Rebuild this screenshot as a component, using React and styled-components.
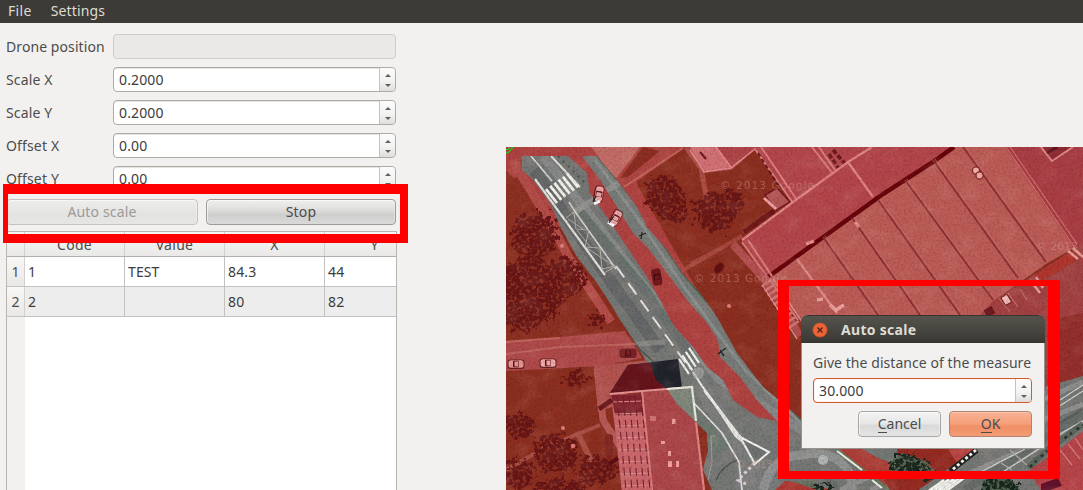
import React from "react";
import styled, { createGlobalStyle, css } from "styled-components";

const Global = createGlobalStyle`
  * { box-sizing: border-box; }
  html, body { margin: 0; padding: 0; }
  body { background: #f2f1f0; overflow: hidden; }
`;

const Window = styled.div`
  position: relative;
  width: 1083px;
  height: 490px;
  overflow: hidden;
  display: flex;
  flex-direction: column;
  background: #f2f1f0;
  color: #4c4c4c;
  font-family: "Noto Sans", "Open Sans", sans-serif;
  font-size: 14px;
  line-height: 20px;
`;

const MenuBar = styled.nav`
  flex: none;
  height: 23px;
  display: flex;
  gap: 19px;
  padding: 1px 8px 0;
  background: #3c3b37;
  color: #dfdbd2;
`;

const Fit = styled.span`
  white-space: pre;
  letter-spacing: ${(p) => p.$ls || 0}px;
`;

const Workspace = styled.div`
  flex: 1;
  min-height: 0;
  display: flex;
  justify-content: space-between;
`;

const Sidebar = styled.aside`
  width: 397px;
  padding: 11px 0 0 6px;
  display: flex;
  flex-direction: column;
`;

const Form = styled.div`
  display: flex;
  flex-direction: column;
  gap: 8px;
  margin-bottom: 8px;
`;

const FormRow = styled.div`
  display: grid;
  grid-template-columns: 107px 283px;
  height: 25px;
  align-items: center;
`;

const Spin = styled.div`
  height: 25px;
  display: flex;
  align-items: stretch;
  border: 1px solid ${(p) => (p.$focus ? "#d45a2c" : "#aeaaa5")};
  border-radius: 4px;
  overflow: hidden;
  background: #fff;
  color: #3c3c3c;
  box-shadow: ${(p) => (p.$focus ? "inset 0 0 1px #e58a66" : "inset 0 1px 0 #e8e5e1")};
  ${(p) =>
    p.$disabled &&
    css`
      background: #eae9e8;
      border-color: #cfcdcb;
      box-shadow: none;
    `}
`;

const SpinValue = styled.div`
  flex: 1;
  padding: 2px 0 0 5px;
`;

const SpinArrows = styled.div`
  width: 17px;
  margin: -1px -1px -1px 0;
  padding: 6px 0 4px;
  display: flex;
  flex-direction: column;
  align-items: center;
  justify-content: space-between;
  border: 1px solid #c4c1be;
  border-radius: 0 4px 4px 0;
  background: linear-gradient(#fbfbfb, #f3f3f2 55%, #dededd);
`;

const Arrow = styled.i`
  width: 0;
  height: 0;
  border: solid transparent;
  border-width: ${(p) => (p.$up ? "0 3px 3px" : "3px 3px 0")};
  ${(p) => (p.$up ? "border-bottom-color" : "border-top-color")}: #606060;
`;

const ButtonRow = styled.div`
  display: flex;
  justify-content: flex-end;
  gap: 8px;
  padding-right: ${(p) => p.$inset || 0}px;
`;

const Button = styled.button`
  width: ${(p) => p.$w}px;
  height: 26px;
  padding: 0;
  font: inherit;
  line-height: 22px;
  color: #4c4c4c;
  border: 1px solid #9e9c9a;
  border-radius: 4px;
  background: linear-gradient(#efefee, #dcdcdb 45%, #cecece 60%, #dadad9);
  box-shadow: inset 1px 1px 0 #ffffff90, inset -1px 0 0 #ffffff50;
  ${(p) =>
    p.$kind === "light" &&
    css`
      background: linear-gradient(#f3f3f3, #e6e6e6 50%, #d9d9d9 55%, #e4e4e4);
      border-color: #a9a7a5;
    `}
  ${(p) =>
    p.$kind === "primary" &&
    css`
      background: linear-gradient(#f9b294, #f59f7b 50%, #f08f66 60%, #f39c76);
      border-color: #b08472;
      box-shadow: inset 0 1px 0 #fcc7b0;
    `}
  ${(p) =>
    p.$kind === "disabled" &&
    css`
      background: linear-gradient(#ededec, #e3e3e2 60%, #e7e6e5);
      color: #9c9a98;
      border-color: #c5c3c1;
    `}
`;

const Mnemonic = styled.span`
  border-bottom: 1px solid #4c4c4c;
  display: inline-block;
  line-height: 17px;
`;

const Table = styled.div`
  flex: 1;
  margin-top: 6px;
  width: 391px;
  overflow: hidden;
  border: solid #b9b5b0;
  border-width: 1px 1px 0;
  background: linear-gradient(to right, #f2f1f0 18px, #fff 18px);
  color: #3c3c3c;
`;

const TableRow = styled.div`
  display: grid;
  grid-template-columns: 18px 100px 100px 100px 100px;
  width: 418px;
  height: ${(p) => (p.$head ? 25 : 30)}px;
  border-bottom: 1px solid ${(p) => (p.$head ? "#b3afaa" : "#c4c2c0")};
  background: ${(p) => (p.$head ? "linear-gradient(#f6f6f5, #eae9e8)" : p.$alt ? "#ededed" : "#fff")};
`;

const Cell = styled.div`
  padding: 5px 0 0 3px;
  border-right: 1px solid #c4c2c0;
`;

const HeadCell = styled.div`
  padding-top: ${(p) => (p.$row ? 5 : 3)}px;
  text-align: center;
  color: #4c4c4c;
  border-right: 1px solid #d3d1cf;
  background: ${(p) => (p.$row ? "linear-gradient(#f8f8f7, #e9e8e7)" : "transparent")};
`;

const MapPane = styled.main`
  width: 577px;
  padding-top: 124px;
  svg { display: block; }
`;

const Highlight = styled.div`
  position: absolute;
  left: ${(p) => p.$x}px;
  top: ${(p) => p.$y}px;
  width: ${(p) => p.$w}px;
  height: ${(p) => p.$h}px;
  border: solid #f00;
  border-width: ${(p) => p.$b};
  pointer-events: none;
`;

const Dialog = styled.section`
  position: absolute;
  left: 801px;
  top: 315px;
  width: 244px;
  height: 134px;
  border-radius: 7px 7px 0 0;
  background: #f2f1f0;
  border: 1px solid #96938c;
  border-top: 0;
`;

const TitleBar = styled.header`
  height: 28px;
  margin: 0 -1px;
  padding: 0 11px;
  display: flex;
  align-items: center;
  gap: 13px;
  border-radius: 7px 7px 0 0;
  border-top: 1px solid #35342f;
  background: linear-gradient(#55534c, #3d3c38 85%, #35342f);
  color: #dfdbd2;
  font-weight: 700;
`;

const DialogBody = styled.div`
  padding: 10px 12px 0 11px;
  display: flex;
  flex-direction: column;
`;

const SpinHolder = styled.div`
  margin: 5px 0 8px;
`;

function SpinBox({ value, focus }) {
  return (
    <Spin $focus={focus}>
      <SpinValue><Fit $ls={0.12}>{value}</Fit></SpinValue>
      <SpinArrows><Arrow $up /><Arrow /></SpinArrows>
    </Spin>
  );
}

const lerp = (a, b, n) => Array.from({ length: n }, (_, i) => a + ((b - a) * i) / (n - 1));

const mainRoad =
  "522,156 568,156 587,173 590,193 607,217 627,247 647,277 660,300 670,320 677,330 693,347 707,367 723,380 733,400 757,417 777,421 802,438 830,449 1083,376 1083,490 712,490 703,470 708,450 707,433 697,423 677,403 657,380 650,367 627,330 620,320 610,303 597,283 577,257 562,230 550,203 533,180 522,170";
const sideRoad =
  "582,156 597,156 617,180 637,207 647,227 667,250 682,273 700,293 717,317 737,353 763,387 787,407 802,420 802,438 777,421 757,400 740,377 720,357 718,340 707,323 687,300 667,273 647,247 633,233 617,207 600,180";

const trees = [
  [535, 235, 24, 22], [530, 290, 34, 34], [566, 278, 20, 20], [522, 310, 22, 22],
  [664, 195, 18, 20], [674, 208, 12, 14], [715, 212, 21, 20], [735, 200, 9, 12],
  [519, 426, 17, 12], [556, 453, 22, 20], [518, 474, 16, 14], [597, 470, 20, 14],
  [576, 377, 11, 9], [597, 320, 7, 7], [560, 486, 26, 8], [1070, 350, 12, 22],
];

function Car({ x, y, r = 0, body = "#f0a9a9", cabin = "#5d1015" }) {
  return (
    <g transform={`translate(${x} ${y}) rotate(${r})`}>
      <rect x="-8.5" y="-4.5" width="17" height="9.5" rx="3" fill="#4b0c0e" opacity=".7" />
      <rect x="-7.5" y="-3.8" width="15" height="7.6" rx="2.5" fill={body} />
      <rect x="-3" y="-3.3" width="6" height="6.6" rx="1" fill={cabin} />
      <rect x="-1.5" y="-2.5" width="4" height="5" fill={body} />
    </g>
  );
}

function AerialMap() {
  return (
    <svg width="577" height="343" viewBox="506 147 577 343">
      <defs>
        <filter id="grain" x="0" y="0" width="100%" height="100%">
          <feTurbulence type="fractalNoise" baseFrequency=".45" numOctaves="3" seed="4" />
          <feColorMatrix values="0 0 0 0 0  0 0 0 0 0  0 0 0 0 0  2.2 0 0 0 -.92" />
        </filter>
        <filter id="glow" x="0" y="0" width="100%" height="100%">
          <feTurbulence type="fractalNoise" baseFrequency=".05 .07" numOctaves="3" seed="9" />
          <feColorMatrix values="0 0 0 0 .9  0 0 0 0 .6  0 0 0 0 .5  2 0 0 0 -.95" />
        </filter>
        <filter id="leaves" x="-20%" y="-20%" width="140%" height="140%">
          <feTurbulence type="fractalNoise" baseFrequency=".17" numOctaves="3" seed="3" result="n" />
          <feDisplacementMap in="SourceGraphic" in2="n" scale="20" xChannelSelector="R" yChannelSelector="G" result="d" />
          <feTurbulence type="fractalNoise" baseFrequency=".3" numOctaves="2" seed="8" />
          <feColorMatrix values="0 0 0 0 0  0 0 0 0 0  0 0 0 0 0  7 0 0 0 -2.4" result="m" />
          <feComposite in="d" in2="m" operator="in" />
        </filter>
        <clipPath id="roads"><polygon points={mainRoad} /><polygon points={sideRoad} /></clipPath>
      </defs>

      <rect x="506" y="147" width="577" height="343" fill="#8d2f20" />

      {/* pavements and lawns */}
      <polygon points="506,147 622,147 640,190 760,400 802,425 802,440 720,400 506,170" fill="#b04341" />
      <polygon points="506,180 522,176 556,222 575,262 612,322 627,340 506,338" fill="#8e3022" />
      <path d="M512 160L550 222L569 258L611 322" stroke="#b54d49" strokeWidth="9" fill="none" />
      <polygon points="591,147 650,147 640,158 616,180" fill="#c46c66" />
      <polygon points="640,147 685,147 618,195 612,184" fill="#b04743" />
      <path d="M624 187L683 148" stroke="#c6645f" strokeWidth="2" />
      <polygon points="643,147 660,151 628,177 620,178" fill="#8d2f22" />
      <path d="M680 272L742 236M690 264L724 247" stroke="#b04e45" strokeWidth="4" opacity=".75" />
      <path d="M686 147L701 168L706 195" stroke="#b04e45" strokeWidth="5" fill="none" />
      <polygon points="506,341 560,337 625,331 642,358 602,366 506,371" fill="#b04a4a" />
      <path d="M506 354L560 347L636 344M506 342L560 338" stroke="#c0645e" strokeWidth="2" fill="none" />
      <polygon points="594,366 650,360 628,392 612,407 598,412" fill="#b4534f" />
      <path d="M597 368L603 420L621 448L625 490" stroke="#b75855" strokeWidth="7" fill="none" />
      <path d="M506 470L546 447L600 425" stroke="#ac5046" strokeWidth="4" fill="none" />
      <path d="M577 432L592 462" stroke="#ac5046" strokeWidth="6" />
      <g fill="#681313" filter="url(#leaves)">
        {trees.map(([x, y, rx, ry], i) => <ellipse key={i} cx={x} cy={y} rx={rx} ry={ry} />)}
      </g>

      {/* warehouse complex */}
      <polygon points="688,147 758,147 732,170 704,173" fill="#b04549" />
      <polygon points="690,147 716,147 731,167 704,172" fill="#d27074" />
      <path d="M690 150L704 172L731 168L756 148M716 147L731 167" stroke="#e58c8d" strokeWidth="1.5" fill="none" />
      <path d="M700 152L706 159" stroke="#6a1820" strokeWidth="2" />
      <polygon points="755,147 874,147 848,163 793,203" fill="#b4474d" />
      <path d="M755 149L793 203M761 147L797 200M812 147L833 174M819 147L835 170" stroke="#df8183" strokeWidth="1.8" fill="none" />
      <path d="M758 153L780 188" stroke="#6b151a" strokeWidth="2" strokeDasharray="4 3" />
      <path d="M833 150L847 166M829 154L839 169" stroke="#70171d" strokeWidth="3.5" strokeDasharray="5 2" />
      <polygon points="765,195 777,188 790,202 775,211" fill="#b55858" stroke="#76191e" strokeWidth="1.5" />
      <path d="M764 198L776 209" stroke="#f0a3a2" strokeWidth="3" />
      <path d="M744 232L774 211" stroke="#6b1013" strokeWidth="5" />
      <polygon points="742,240 793,202 848,162 872,147 952,147 768,278" fill="#b4464b" />
      <path d="M742 240L793 202L848 162L872 147M848 162L873 197" stroke="#e28485" strokeWidth="2.2" fill="none" />
      <polygon points="768,278 797,258 883,194 952,147 1005,147 1074,248 1046,264 992,302 960,340 815,340" fill="#bd5c57" />
      <path d="M768 277L797 256L883 194L933 162L954 147" stroke="#68040b" strokeWidth="4.5" fill="none" />
      <path d="M823 237L878 315M852 218L920 315M878 200L960 315M905 180L993 300M933 160L1018 278M963 147L1046 262" stroke="#8d3034" strokeWidth="1.7" />
      <path d="M824 236L879 314M853 217L921 314M879 199L961 314M906 179L994 299M934 159L1019 277M964 146L1047 261" stroke="#cb6b65" strokeWidth=".8" transform="translate(1 0)" />
      <path d="M797 259L837 313" stroke="#e08b86" strokeWidth="2.2" />
      <path d="M742 242L768 278L798 320M748 240L772 276" stroke="#dd7d7d" strokeWidth="2" fill="none" />
      <path d="M733 244L765 280L800 336" stroke="#b44f4f" strokeWidth="8" fill="none" />
      <path d="M766 282L796 328" stroke="#d27876" strokeWidth="12" strokeDasharray="2.5 3" />
      <path d="M763 286L797 339M773 279L805 326" stroke="#e29391" strokeWidth="1.3" />
      <path d="M806 244L814 241M855 222L859 227" stroke="#e5908a" strokeWidth="3" />
      <polygon points="1005,147 1083,147 1083,250 1074,248" fill="#aa3e45" />
      <path d="M1006 147L1075 248M1010 147L1077 244" stroke="#d16e70" strokeWidth="1.2" />
      <path d="M1041 147L1052 161L1073 147" fill="#8d2630" stroke="#dd8785" strokeWidth="2" />
      <path d="M1047 153L1057 147" stroke="#5c1016" strokeWidth="3" />
      <polygon points="1073,250 1083,246 1083,380 1040,400 960,340 992,302" fill="#a44243" />
      <polygon points="1034,275 1072,251 1080,258 1040,282" fill="#b0362e" />
      <path d="M1068 251L1078 259M1073 248L1083 257M1030 280L1040 293M1036 277L1043 288" stroke="#e59c96" strokeWidth="2.5" />
      <path d="M1008 293L1018 307M1020 289L1027 300M999 298L1010 312" stroke="#c36c6b" strokeWidth="1.2" />
      <rect x="985" y="308" width="9" height="8" fill="#6b151d" transform="rotate(-30 989 312)" />
      <rect x="1003" y="295" width="7" height="9" rx="1" fill="#f5bcb9" stroke="#721d20" transform="rotate(-32 1007 300)" />
      <g fill="#f5aba7" stroke="#812b2c" strokeWidth="1.4">
        <circle cx="976" cy="170.5" r="3.6" /><circle cx="979.500" cy="175.500" r="3.600" />
      </g>
      <path d="M817 300L823 299M830 305L836 310L844 305" stroke="#eba09c" strokeWidth="3.5" fill="none" />
      <polygon points="1060,318 1083,313 1083,376 1060,390" fill="#942f2c" />

      {/* roads */}
      <polygon points={mainRoad} fill="#767876" />
      <polygon points={sideRoad} fill="#787c79" />
      <g clipPath="url(#roads)" fill="none">
        <path d="M522 180L575 268L650 375L725 450" stroke="#6f7b72" strokeWidth="14" />
        <path d="M534 170L607 276L660 350" stroke="#656768" strokeWidth="12" />
        <path d="M543 156L600 228L672 322L720 380L802 430" stroke="#888a8a" strokeWidth="9" />
        <path d="M580 212L640 284L690 353" stroke="#6d7170" strokeWidth="9" />
        <path d="M585 215L650 290L672 325" stroke="#66776b" strokeWidth="2" />
        <path d="M597 154L636 202L683 273L715 310L740 353L802 420" stroke="#4d6151" strokeWidth="3.5" />
        <path d="M595 160L634 213L684 287L745 370L802 424" stroke="#8a8f8d" strokeWidth="3" />
        <path d="M575 212L632 174" stroke="#989996" strokeWidth="6" opacity=".7" />
        <path d="M623 345L665 342" stroke="#93948f" strokeWidth="5" opacity=".7" />
        <path d="M596 290L637 347L655 363M618 318L640 350" stroke="#4a504c" strokeWidth="1.5" />
        <path d="M535 179L605 275" stroke="#e2e1db" strokeWidth="2.2" />
        <path d="M531 156L552 181M569 202L576 213L616 269" stroke="#d8d8d3" strokeWidth="1.5" />
        <path d="M551 156L580 187" stroke="#e1dfd9" strokeWidth="2" />
        <path d="M558 156L586 184" stroke="#465046" strokeWidth="2" strokeDasharray="2 5" />
        <path d="M616 266L690 369" stroke="#e5e4e1" strokeWidth="2" strokeDasharray="14 7" />
        <path d="M566 218L574 212L576 229L589 230L585 247L600 248L602 269L616 266M568 219L583 229M577 230L591 248M587 248L614 266M604 273L616 266" stroke="#b2b2a6" strokeWidth="1" />
        <g stroke="#f5f5ef" strokeWidth="2.8">
          {lerp(546, 567, 6).map((x, i) => <path key={i} d={`M${x} ${189 - i * 3.1}l11 14`} />)}
          {lerp(679, 689, 4).map((x, i) => <path key={i} d={`M${x} ${359 - i * 3.7}l10 15`} strokeWidth="2.2" />)}
        </g>
        <polygon points="690,385 702,375 770,475 790,490 735,490 735,458" fill="#7c7e7d" />
        <path d="M693 372L702 386L740 437L769 452L755 464L740 437L704 390M740 437L705 392" stroke="#f5f5f1" strokeWidth="2" />
        <polygon points="704,390 741,436 745,445 735,437" fill="#e7e7e4" />
        <polygon points="744,441 765,452 755,460" fill="#707271" />
        <path d="M693 402L722 433L739 462L742 490" stroke="#e1e1de" strokeWidth="1.7" />
        <path d="M716 480Q722 466 737 460" stroke="#465047" strokeWidth="1.2" />
        <path d="M716 436H711L712 462L708 480" stroke="#9aa39a" strokeWidth="1" />
        <path d="M755 463L738 480L746 484" stroke="#dcd4e2" strokeWidth="3" strokeDasharray="3 3" />
        <path d="M763 490Q772 456 801 455Q837 448 850 475L853 490" stroke="#919393" strokeWidth="9" />
        <path d="M780 490Q796 470 826 477L840 490" stroke="#6b6f6e" strokeWidth="6" />
        <path d="M840 490L1083 382M870 490L1083 404M930 490L1083 424" stroke="#8f908e" strokeWidth="5" />
        <path d="M965 490L1083 414" stroke="#696e6b" strokeWidth="8" />
        <path d="M975 475L1025 449M995 477L1045 445M1058 435L1083 421M1058 407L1083 391M1060 400L1083 385" stroke="#cfcfcb" strokeWidth="1.4" />
        <path d="M1060 423L1083 409" stroke="#5d615e" strokeWidth="3" />
      </g>
      <circle cx="823" cy="460" r="5" fill="#b5b6b6" />
      <circle cx="698" cy="373" r="6" fill="#aaa" opacity=".65" />

      {/* roundabout verges and the crossing under the dialog */}
      <path d="M838 449H866L892 463L900 476L920 490H889L862 470Z" fill="#ae4039" />
      <path d="M862 449H897L893 463L880 459Z" fill="#747875" />
      <path d="M837 450L852 462L865 472L889 490" stroke="#667a62" strokeWidth="4" fill="none" />
      <path d="M837 451L862 470M872 480L882 488" stroke="#f0eee5" strokeWidth="2" />
      <path d="M897 449H975L952 466L933 480L918 490H890L884 480L900 472Z" fill="#962c23" />
      <path d="M948 449H974L957 463Z" fill="#b94442" />
      <path d="M775 490L785 481L812 483L830 490Z" fill="#b03a34" />
      <path d="M790 481L812 481L825 490H818Z" fill="#65705f" />
      <path d="M890 462L903 453L925 461L938 474L930 480L912 474L892 473Z" fill="#526a55" opacity=".9" />
      <path d="M890 462L903 453L925 461L938 474L930 480L912 474L892 473Z" fill="#14251b" filter="url(#leaves)" />
      <path d="M816 484L829 482L834 490H812Z" fill="#17251b" filter="url(#leaves)" />
      <path d="M984 480L1010 478L1020 490H982Z" fill="#4d604e" />
      <path d="M984 480L1010 478L1020 490H982Z" fill="#17251a" filter="url(#leaves)" />
      <path d="M977 450L950 471" stroke="#1f201e" strokeWidth="5.5" />
      <path d="M976 450L952 470" stroke="#f5f4ed" strokeWidth="2.8" strokeDasharray="3 2.4" />
      <g stroke="#f5f5ef" strokeWidth="2.6">
        {[0, 1, 2, 3, 4].map((i) => <path key={i} d={`M${926 + i * 5} ${493 - i * 0.5}l18 -13`} />)}
      </g>
      <path d="M1010 450L1030 468M1001 463L1012 470" stroke="#aeafa8" strokeWidth="1.2" />
      <path d="M1028 468L1048 449L1083 424" stroke="#5c665c" strokeWidth="6" fill="none" />
      <path d="M1030 467L1048 450L1083 425" stroke="#28302a" strokeWidth="2.5" strokeDasharray="3 4 2 6" fill="none" />
      <path d="M1028 471L1060 449L1083 431V490H1041Z" fill="#b84549" />
      <path d="M1060 450l12 15M1068 444l12 15M1075 438l8 12" stroke="#d47d7c" strokeWidth="1.3" />
      <path d="M1041 484L1058 478L1062 486L1050 490H1041Z" fill="#64122c" />

      {/* lower office block */}
      <polygon points="628,365 678,359 682,387 610,393" fill="#20232b" />
      <polygon points="628,365 650,363 656,380 667,389 610,393" fill="#67141c" />
      <polygon points="642,392 692,387 704,490 652,490" fill="#ad474a" />
      <polygon points="667,389 692,387 695,421 677,404" fill="#7f887b" />
      <path d="M610 394L642 391L692 387" stroke="#e79696" strokeWidth="2.2" fill="none" />
      <path d="M667 389L692 387L696 421" stroke="#eaece3" strokeWidth="2.2" fill="none" />
      <path d="M696 422L704 490M642 392L652 490" stroke="#dd8383" strokeWidth="2.2" />
      <polygon points="611,395 641,394 652,490 622,490" fill="#cb666b" />
      <polygon points="611,395 641,394 643,414 615,415" fill="#84252e" />
      <g stroke="#75202a" strokeWidth="1.1">
        {lerp(402, 486, 8).map((y, i) => (
          <path key={i} d={`M${613 + i * 1.4} ${y}l29 -1`} stroke="#e79090" />
        ))}
        {lerp(0, 24, 5).map((x, i) => (
          <path key={i} d={`M${617 + x} 396l9 94`} strokeDasharray="8 4" />
        ))}
      </g>
      <path d="M599 409L612 400" stroke="#68151a" strokeWidth="5" />
      <rect x="605" y="434" width="8" height="24" rx="4" fill="#80231e" />
      <path d="M609 464L618 458" stroke="#5d1014" strokeWidth="4" />
      <g fill="#f29f9d">
        <rect x="672" y="419" width="3.5" height="5" /><rect x="661" y="441" width="4" height="3" />
        <rect x="668" y="451" width="3" height="5" /><rect x="668" y="461" width="4" height="6" />
        <rect x="676" y="461" width="3" height="6" /><rect x="650" y="416" width="6" height="5" opacity=".5" />
      </g>

      {/* traffic */}
      <Car x={599} y={194} r={100} /><Car x={616} y={218} r={118} />
      <path d="M594 204L600 201M608 222L614 226" stroke="#f8f8f8" strokeWidth="3" />
      <path d="M593 202L596 196M609 223L613 217M639 236L646 233M641 239L642 232" stroke="#1b2020" strokeWidth="1.2" />
      <Car x={657} y={277} r={80} body="#74191e" cabin="#3c080c" />
      <Car x={516} y={364} body="#e79796" /><Car x={548} y={363} />
      <Car x={628} y={353} body="#7c1f24" cabin="#46090d" />
      <ellipse cx="719" cy="268" rx="6" ry="4" transform="rotate(-50 719 268)" fill="#631113" />
      <path d="M718 354L726 348M720 350L724 356" stroke="#141c19" strokeWidth="1.3" />
      <g fill="#df7d7b"><circle cx="563" cy="428" r="2" /><circle cx="573" cy="446" r="2.2" /><circle cx="562" cy="246" r="2" /><circle cx="729" cy="306" r="2" /></g>

      <g fill="#e0a49a" opacity=".38" fontFamily="DejaVu Sans, sans-serif" fontSize="10.5">
        <text x="694" y="282" textLength="93">© 2013 Google</text>
        <text x="720" y="189" textLength="94">© 2013 Google</text>
        <text x="1036" y="250" textLength="42">© 2013</text>
        <text x="735" y="468" textLength="38">© 2013</text>
      </g>

      <rect x="506" y="147" width="577" height="343" filter="url(#glow)" opacity=".14" />
      <rect x="506" y="147" width="577" height="343" filter="url(#grain)" opacity=".15" />

      <g stroke="#11dd11" strokeWidth="1.2" fill="none">
        <path d="M506 149.500H508L510 147M506 153L509 152L513 147" />
      </g>
    </svg>
  );
}

const fields = [["Scale X", "0.2000"], ["Scale Y", "0.2000"], ["Offset X", "0.00"], ["Offset Y", "0.00"]];
const rows = [["1", "1", "TEST", "84.3", "44"], ["2", "2", "", "80", "82"]];

export default function App() {
  return (
    <Window>
      <Global />
      <MenuBar><Fit $ls={0.35}>File</Fit><Fit $ls={0.12}>Settings</Fit></MenuBar>
      <Workspace>
        <Sidebar>
          <Form>
            <FormRow><Fit $ls={0.08}>Drone position</Fit><Spin $disabled /></FormRow>
            {fields.map(([label, value]) => (
              <FormRow key={label}><Fit $ls={0.15}>{label}</Fit><SpinBox value={value} /></FormRow>
            ))}
          </Form>
          <ButtonRow $inset={1}>
            <Button $w={192} $kind="disabled" disabled><Fit $ls={0.15}>Auto scale</Fit></Button>
            <Button $w={190}><Fit $ls={0.15}>Stop</Fit></Button>
          </ButtonRow>
          <Table>
            <TableRow $head>
              <HeadCell />
              {["Code", "Value", "X", "Y"].map((h) => <HeadCell key={h}><Fit $ls={0.3}>{h}</Fit></HeadCell>)}
            </TableRow>
            {rows.map(([n, ...cells], i) => (
              <TableRow key={n} $alt={i % 2 === 1}>
                <HeadCell $row>{n}</HeadCell>
                {cells.map((c, j) => <Cell key={j}><Fit $ls={0.12}>{c}</Fit></Cell>)}
              </TableRow>
            ))}
          </Table>
        </Sidebar>
        <MapPane><AerialMap /></MapPane>
      </Workspace>

      <Highlight $x={3} $y={184} $w={405} $h={59} $b="10px 8px 9px 5px" />
      <Highlight $x={778} $y={280} $w={282} $h={199} $b="6px 12px 8px 11px" />

      <Dialog>
        <TitleBar>
          <svg width="16" height="16" viewBox="0 0 16 16">
            <circle cx="8" cy="8" r="7.300" fill="#ec6337" stroke="#9c4325" strokeWidth=".6" />
            <path d="M5.500 5.500L10.500 10.500M10.500 5.500L5.500 10.500" stroke="#4a2318" strokeWidth="1.300" />
          </svg>
          <Fit $ls={0.3}>Auto scale</Fit>
        </TitleBar>
        <DialogBody>
          <Fit $ls={0.06}>Give the distance of the measure</Fit>
          <SpinHolder><SpinBox value="30.000" focus /></SpinHolder>
          <ButtonRow>
            <Button $w={83} $kind="light"><Mnemonic>C</Mnemonic>ancel</Button>
            <Button $w={83} $kind="primary"><Mnemonic>O</Mnemonic>K</Button>
          </ButtonRow>
        </DialogBody>
      </Dialog>
    </Window>
  );
}
